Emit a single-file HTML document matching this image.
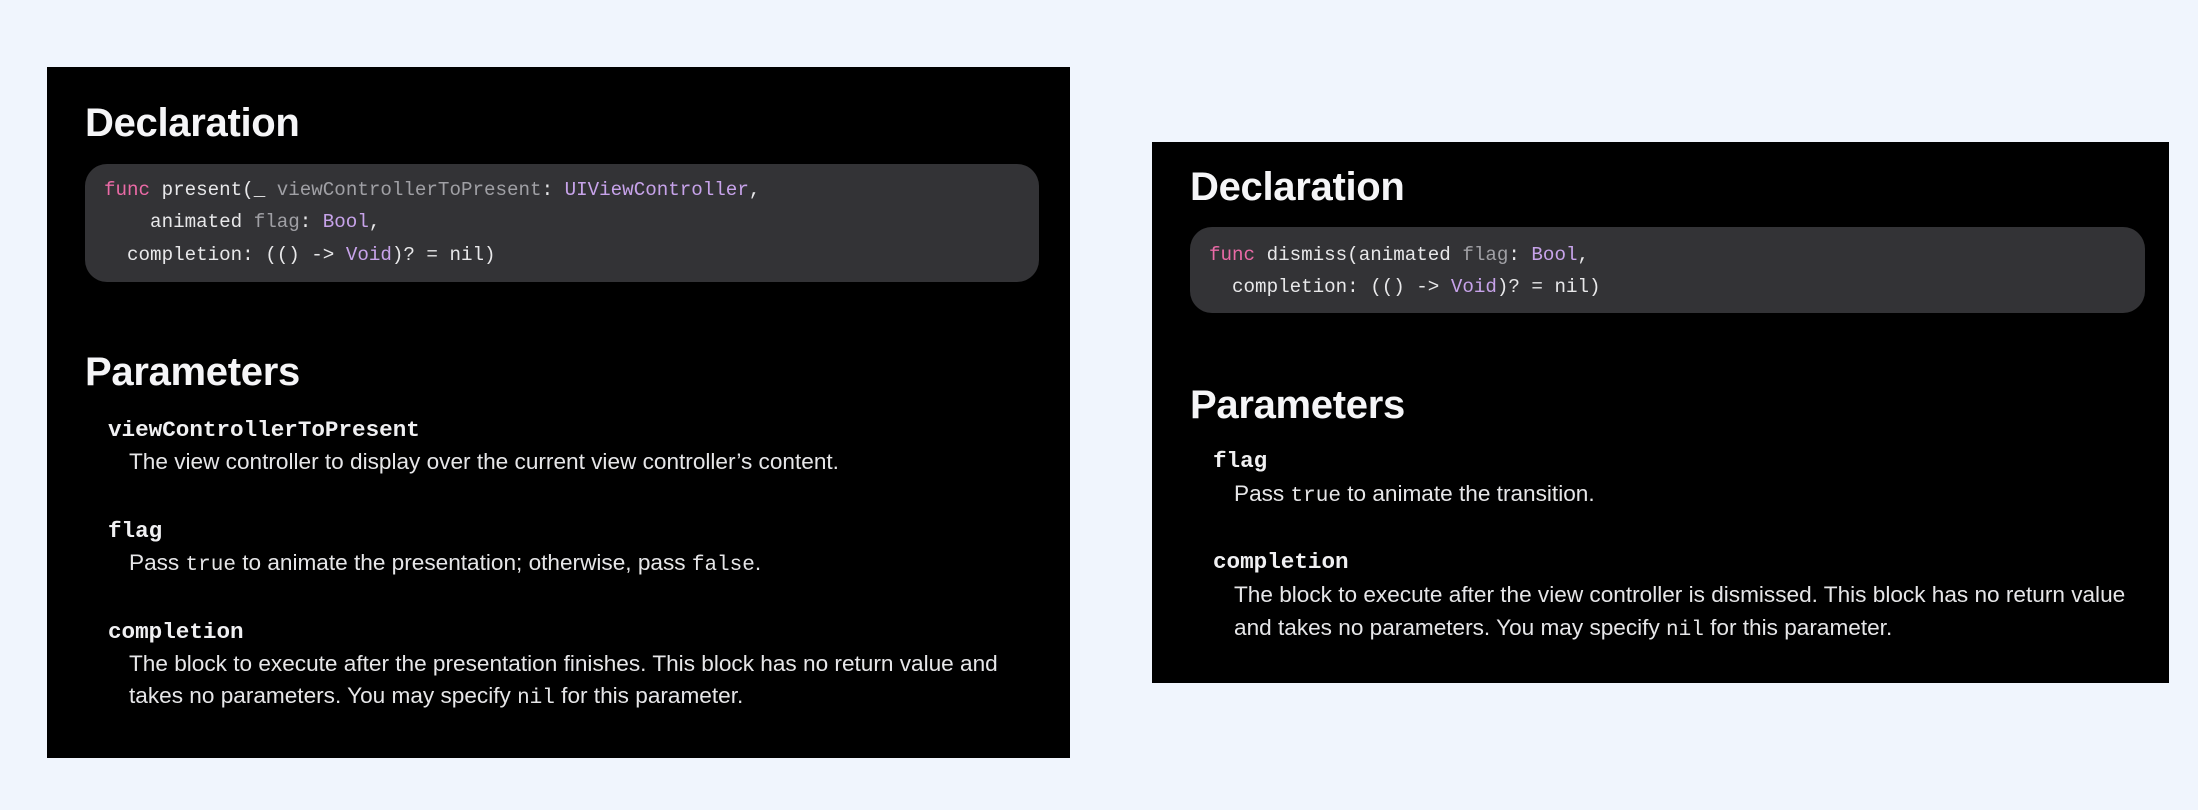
<!DOCTYPE html>
<html><head><meta charset="utf-8"><style>
*{margin:0;padding:0;box-sizing:border-box}
body{width:2198px;height:810px;background:#f0f5fd;position:relative;overflow:hidden;font-family:"Liberation Sans",sans-serif;color:#ececec}
.panel{position:absolute;background:#000}
.a{position:absolute;white-space:nowrap}
h2{position:absolute;font-size:40px;font-weight:bold;color:#f5f5f7;line-height:48px;white-space:nowrap;letter-spacing:-0.3px}
.code{position:absolute;background:#333336;border-radius:22px}
.c{position:absolute;font-family:"Liberation Mono",monospace;font-size:19.2px;line-height:32px;color:#e8e8ea;white-space:pre}
.k{color:#ea6aa6}.t{color:#c7a3ea}.p{color:#a0a0a5}
.n{position:absolute;font-family:"Liberation Mono",monospace;font-weight:bold;font-size:22.6px;line-height:30px;color:#f0f0f2;white-space:nowrap}
.d{position:absolute;font-size:22.6px;line-height:32px;color:#e6e6e8;white-space:nowrap}
.d code{font-family:"Liberation Mono",monospace;font-size:21px}
</style></head><body>
<div class="panel" style="left:47px;top:67px;width:1023px;height:691px"></div>
<div class="panel" style="left:1152px;top:142px;width:1017px;height:541px"></div>

<h2 style="left:85px;top:99px">Declaration</h2>
<div class="code" style="left:85px;top:164px;width:954px;height:118px"></div>
<div class="c" style="left:104px;top:174px"><span class="k">func</span> present(_ <span class="p">viewControllerToPresent</span>: <span class="t">UIViewController</span>,</div>
<div class="c" style="left:104px;top:206px">    animated <span class="p">flag</span>: <span class="t">Bool</span>,</div>
<div class="c" style="left:104px;top:239px">  completion: (() -&gt; <span class="t">Void</span>)? = nil)</div>

<h2 style="left:85px;top:348px">Parameters</h2>
<div class="n" style="left:108px;top:415px">viewControllerToPresent</div>
<div class="d" style="left:129px;top:446px">The view controller to display over the current view controller’s content.</div>
<div class="n" style="left:108px;top:516px">flag</div>
<div class="d" style="left:129px;top:547px">Pass <code>true</code> to animate the presentation; otherwise, pass <code>false</code>.</div>
<div class="n" style="left:108px;top:617px">completion</div>
<div class="d" style="left:129px;top:648px">The block to execute after the presentation finishes. This block has no return value and</div>
<div class="d" style="left:129px;top:680px">takes no parameters. You may specify <code>nil</code> for this parameter.</div>

<h2 style="left:1190px;top:163px">Declaration</h2>
<div class="code" style="left:1190px;top:227px;width:955px;height:86px"></div>
<div class="c" style="left:1209px;top:239px"><span class="k">func</span> dismiss(animated <span class="p">flag</span>: <span class="t">Bool</span>,</div>
<div class="c" style="left:1209px;top:271px">  completion: (() -&gt; <span class="t">Void</span>)? = nil)</div>

<h2 style="left:1190px;top:381px">Parameters</h2>
<div class="n" style="left:1213px;top:446px">flag</div>
<div class="d" style="left:1234px;top:478px">Pass <code>true</code> to animate the transition.</div>
<div class="n" style="left:1213px;top:547px">completion</div>
<div class="d" style="left:1234px;top:579px">The block to execute after the view controller is dismissed. This block has no return value</div>
<div class="d" style="left:1234px;top:612px">and takes no parameters. You may specify <code>nil</code> for this parameter.</div>
</body></html>
